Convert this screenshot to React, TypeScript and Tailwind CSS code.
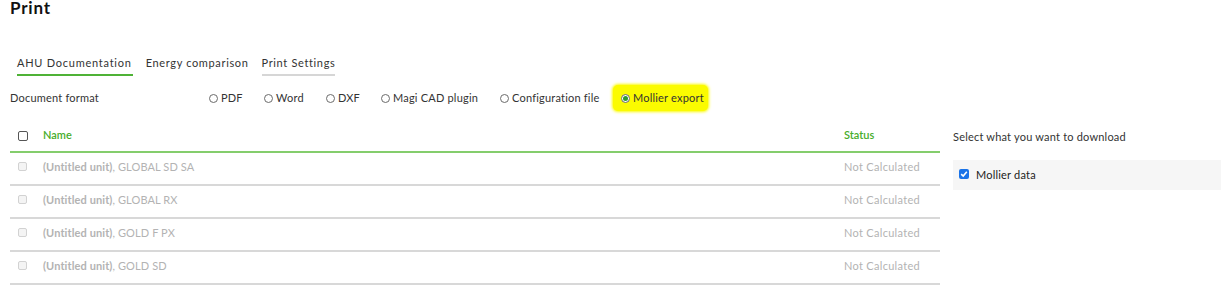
import React from 'react';

const formats = [
  { label: 'PDF', w: 'w-[55px]' },
  { label: 'Word', w: 'w-[62px]' },
  { label: 'DXF', w: 'w-[55px]' },
  { label: 'Magi CAD plugin', w: 'w-[119px]' },
  { label: 'Configuration file', w: 'w-[121px]' },
];

const units = ['GLOBAL SD SA', 'GLOBAL RX', 'GOLD F PX', 'GOLD SD'];

function Radio({ checked }: { checked?: boolean }) {
  return (
    <span className="w-[9px] h-[9px] rounded-full border border-[#6b6b6b] flex items-center justify-center bg-white shrink-0">
      {checked && <span className="w-[5px] h-[5px] rounded-full bg-[#2e9a2e]" />}
    </span>
  );
}

function Box({ disabled }: { disabled?: boolean }) {
  return (
    <span
      className={
        disabled
          ? 'w-[9px] h-[9px] rounded-[2px] border border-[#d2d2d2] bg-[#f4f4f4] shrink-0'
          : 'w-[10px] h-[10px] rounded-[2px] border border-[#555] bg-white shrink-0'
      }
    />
  );
}

export default function App() {
  return (
    <div className="w-[1221px] h-[285px] overflow-hidden bg-white pl-[10px] font-['Lato',sans-serif] text-[11px] text-[#333]">
      <h1 className="text-[17px] leading-[16px] font-bold text-[#111] tracking-[0.8px]">Print</h1>

      {/* Tabs */}
      <div className="flex mt-[38px] ml-[7px] gap-[13px] h-[22px]">
        <div className="border-b-2 border-[#4fb236] pr-px leading-[18px] tracking-[0.75px]">AHU Documentation</div>
        <div className="leading-[18px] tracking-[0.65px]">Energy comparison</div>
        <div className="border-b-2 border-[#d6d6d6] leading-[18px] tracking-[0.65px]">Print Settings</div>
      </div>

      {/* Document format */}
      <div className="flex items-center h-[30px] mt-[7px]">
        <div className="w-[199px] tracking-[0.2px]">Document format</div>
        {formats.map((f) => (
          <div key={f.label} className={`flex items-center gap-[3px] ${f.w}`}>
            <Radio />
            <span className="tracking-[0.2px]">{f.label}</span>
          </div>
        ))}
        <div className="flex items-center gap-[3px] bg-[#fbfb00] rounded-[5px] h-[26px] pl-[8px] pr-[4px] -ml-[8px] shadow-[0_0_3px_1px_#fbfb00]">
          <Radio checked />
          <span className="tracking-[0.2px]">Mollier export</span>
        </div>
      </div>

      {/* Main */}
      <div className="flex gap-[13px] mt-[4px]">
        <div className="w-[930px]">
          <div className="flex items-center h-[36px] pt-[3px] border-b-2 border-[#84cd6c] text-[#47ad2b]">
            <div className="w-[33px] pl-[8px] flex"><Box /></div>
            <div className="flex-1 font-semibold">Name</div>
            <div className="w-[96px] font-semibold">Status</div>
          </div>
          {units.map((u) => (
            <div key={u} className="flex items-center h-[33px] border-b-2 border-[#d8d8d8] text-[#b3b3b3] pb-[3px]">
              <div className="w-[33px] pl-[8px] flex -mt-[2px]"><Box disabled /></div>
              <div className="flex-1 tracking-[0.1px]">
                <span className="font-bold">(Untitled unit)</span>, {u}
              </div>
              <div className="w-[96px] tracking-[0.3px]">Not Calculated</div>
            </div>
          ))}
        </div>

        <div className="flex-1 pt-[12px]">
          <div className="h-[31px] leading-[16px] tracking-[0.2px]">Select what you want to download</div>
          <div className="bg-[#f6f6f6] h-[30px] flex items-center pl-[6px] gap-[7px]">
            <span className="w-[10px] h-[10px] rounded-[2px] bg-[#1a73e8] flex items-center justify-center -mt-[2px]">
              <svg width="8" height="8" viewBox="0 0 8 8">
                <path d="M1.2 4.2 L3.2 6 L6.8 1.8" stroke="white" strokeWidth="1.6" fill="none" />
              </svg>
            </span>
            <span className="tracking-[0.2px] text-[#222]">Mollier data</span>
          </div>
        </div>
      </div>
    </div>
  );
}
